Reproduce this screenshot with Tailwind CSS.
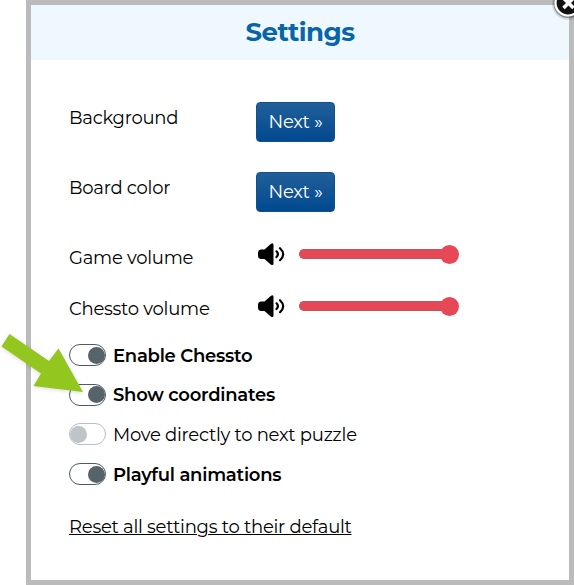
<!DOCTYPE html>
<html lang="en">
<head>
    <meta charset="UTF-8">
    <meta name="viewport" content="width=device-width, initial-scale=1.0">
    <title>Settings</title>
    <script src="https://cdn.jsdelivr.net/npm/@tailwindcss/browser@4"></script>
</head>
<body class="relative bg-white overflow-hidden pl-[26px] text-black font-['Montserrat','Inter',sans-serif]">
    <!-- Settings dialog -->
    <main class="h-[585px] w-[548px] border-5 border-[#bbbbbb] bg-white text-[18px] leading-6 tracking-[-0.25px]">
        <header class="h-[55px] bg-[#f0f8ff] flex items-center justify-center pb-0.5">
            <h1 class="text-[26px] font-bold text-[#0865aa] tracking-[-0.5px]">Settings</h1>
        </header>

        <div class="pl-[38px] pt-[42px]">
            <div class="flex h-10 mb-[30px]">
                <span class="w-[187px] pt-1">Background</span>
                <button class="w-[79px] h-10 rounded-[4px] border border-[#124f8c] bg-linear-to-b from-[#205f99] to-[#004990] text-white tracking-[-0.25px] whitespace-nowrap">Next »</button>
            </div>
            <div class="flex h-10 mb-4">
                <span class="w-[187px] pt-1">Board color</span>
                <button class="w-[79px] h-10 rounded-[4px] border border-[#124f8c] bg-linear-to-b from-[#205f99] to-[#004990] text-white tracking-[-0.25px] whitespace-nowrap">Next »</button>
            </div>

            <!-- Volume sliders -->
            <div class="flex items-center h-[52px]">
                <span class="w-[187px] pt-[7px]">Game volume</span>
                <svg class="w-[30px] h-[24px] mr-[13px]" viewBox="0 0 30 24" fill="none">
                    <path d="M4.500 7.500h4L14.700 2Q17.500 .3 17.500 3v18.500Q17.500 24 14.700 22.500L8.500 17H4.500Q2 16.500 2 14v-3.500Q2 8 4.500 7.500Z" fill="#000"/>
                    <path d="M20.500 9.300q2.800 2.900 0 5.800M24 6.200q6.400 6 0 12" stroke="#000" stroke-width="2.200" stroke-linecap="round"/>
                </svg>
                <div class="flex items-center w-[160px]">
                    <div class="grow h-[10px] rounded-l-full bg-[#e74856] border-y border-l border-[#b65862]"></div>
                    <div class="size-[19px] rounded-full bg-[#e74856] -ml-1"></div>
                </div>
            </div>
            <div class="flex items-center h-[52px]">
                <span class="w-[187px] pt-[5px]">Chessto volume</span>
                <svg class="w-[30px] h-[24px] mr-[13px]" viewBox="0 0 30 24" fill="none">
                    <path d="M4.500 7.500h4L14.700 2Q17.500 .3 17.500 3v18.500Q17.500 24 14.700 22.500L8.500 17H4.500Q2 16.500 2 14v-3.500Q2 8 4.500 7.500Z" fill="#000"/>
                    <path d="M20.500 9.300q2.800 2.900 0 5.800M24 6.200q6.400 6 0 12" stroke="#000" stroke-width="2.200" stroke-linecap="round"/>
                </svg>
                <div class="flex items-center w-[160px]">
                    <div class="grow h-[10px] rounded-l-full bg-[#e74856] border-y border-l border-[#b65862]"></div>
                    <div class="size-[19px] rounded-full bg-[#e74856] -ml-1"></div>
                </div>
            </div>

            <!-- Toggles -->
            <div class="flex items-center gap-[7px] h-[40px] mt-[3px]">
                <span class="flex items-center justify-end w-[37px] h-[22px] rounded-full border border-[#4f5a62]"><span class="size-[17px] rounded-full bg-[#56636b]"></span></span>
                <span class="font-semibold pt-0.5">Enable Chessto</span>
            </div>
            <div class="flex items-center gap-[7px] h-[39px]">
                <span class="flex items-center justify-end w-[37px] h-[22px] rounded-full border border-[#4f5a62]"><span class="size-[17px] rounded-full bg-[#56636b]"></span></span>
                <span class="font-semibold pt-px">Show coordinates</span>
            </div>
            <div class="flex items-center gap-[7px] h-[40px]">
                <span class="flex items-center w-[37px] h-[22px] rounded-full border border-[#b8bec2]"><span class="size-[17px] rounded-full bg-[#bec4c8]"></span></span>
                <span class="pt-0.5">Move directly to next puzzle</span>
            </div>
            <div class="flex items-center gap-[7px] h-[40px]">
                <span class="flex items-center justify-end w-[37px] h-[22px] rounded-full border border-[#4f5a62]"><span class="size-[17px] rounded-full bg-[#56636b]"></span></span>
                <span class="font-semibold pt-0.5">Playful animations</span>
            </div>

            <a href="#" class="inline-block mt-[21px] underline decoration-1">Reset all settings to their default</a>
        </div>
    </main>

    <!-- Close button -->
    <svg class="absolute left-[550px] top-0 w-[24px] h-[24px]" viewBox="0 0 24 24" fill="none">
        <circle cx="18" cy="4" r="16" fill="#000" fill-opacity=".12"/>
        <circle cx="18" cy="3.500" r="14.500" fill="#000" fill-opacity=".35"/>
        <circle cx="18" cy="3" r="12.500" fill="#111" stroke="#fff" stroke-width="2.200"/>
        <path d="M13.500 -2l10 10M23.500 -2l-10 10" stroke="#fff" stroke-width="3.600"/>
    </svg>

    <!-- Pointer arrow -->
    <svg class="absolute left-0 top-[325px] w-[90px] h-[75px] drop-shadow-sm" viewBox="0 0 90 75">
        <path d="M9.500 9L49 36 58.500 23.500 83 67 33.500 61 41 48.500 1.500 21.500Z" fill="#93c720"/>
    </svg>
</body>
</html>
